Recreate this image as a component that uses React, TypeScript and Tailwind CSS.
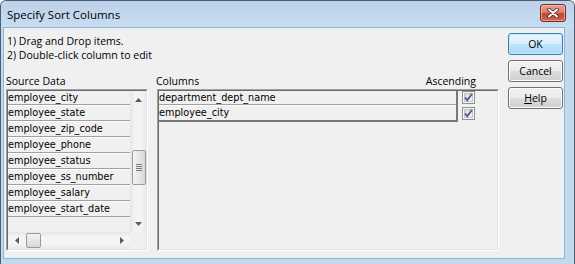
import React from "react";

const Tri = ({ dir }: { dir: "up" | "down" | "left" | "right" }) => {
  const pts =
    dir === "up"
      ? "0,4 3.5,0 7,4"
      : dir === "down"
      ? "0,0 7,0 3.5,4"
      : dir === "left"
      ? "4,0 4,7 0,3.5"
      : "0,0 0,7 4,3.5";
  const w = dir === "up" || dir === "down" ? 7 : 4;
  const h = dir === "up" || dir === "down" ? 4 : 7;
  return (
    <svg width={w} height={h} viewBox={`0 0 ${w} ${h}`}>
      <polygon points={pts} fill="#5c5c5c" />
    </svg>
  );
};

const Check = () => (
  <div className="w-[13px] h-[13px] border border-[#8f8f8f] bg-[#f7f7f7] p-[1px]">
    <div className="w-full h-full border border-[#c4c4c4] bg-[linear-gradient(135deg,#d6d6d6,#f6f6f6)] flex items-center justify-center">
      <svg width="9" height="9" viewBox="0 0 9 9" className="overflow-visible">
        <path d="M1 4.5 L3.3 7.2 L8 0.8" fill="none" stroke="#4a5c9c" strokeWidth="1.8" />
      </svg>
    </div>
  </div>
);

const Bevel = ({ className, children }: { className: string; children: React.ReactNode }) => (
  <div className={`${className} border border-t-[#a0a0a0] border-l-[#a0a0a0] border-b-white border-r-white`}>
    <div className="w-full h-full border border-t-[#696969] border-l-[#696969] border-b-[#e3e3e3] border-r-[#e3e3e3] bg-[#f0f0f0]">
      {children}
    </div>
  </div>
);

const sourceItems = [
  "employee_city",
  "employee_state",
  "employee_zip_code",
  "employee_phone",
  "employee_status",
  "employee_ss_number",
  "employee_salary",
  "employee_start_date",
];

const btnBase =
  "w-[55px] h-[22px] rounded-[3px] border flex items-center justify-center text-black text-[10.5px] leading-none";
const btnGray =
  "border-[#707070] bg-[linear-gradient(to_bottom,#f2f2f2_0%,#ebebeb_50%,#dddddd_50%,#cfcfcf_100%)] shadow-[inset_0_0_0_1px_#fcfcfc]";
const btnBlue =
  "border-[#3c7fb1] bg-[linear-gradient(to_bottom,#eaf6fd_0%,#d9f0fc_50%,#bee6fd_50%,#a7d9f5_100%)] shadow-[inset_0_0_0_1px_#c4e9fd]";

export default function App() {
  return (
    <div className="w-[575px] h-[264px] overflow-hidden bg-[#c4d8ee] border-t border-l border-r border-[#4f5e6e] rounded-t-[6px] font-['Open_Sans',sans-serif] text-black">
      {/* Title bar */}
      <div className="h-[26px] flex items-start justify-between pl-[6px] pr-[8px] bg-[linear-gradient(to_bottom,#bcd2ea,#c9dcf0)]">
        <div className="mt-[6px] text-[11.5px] leading-[16px]">Specify Sort Columns</div>
        <div className="mt-[3px] w-[26px] h-[18px] rounded-[3px] border border-[#7a2c22] bg-[linear-gradient(to_bottom,#e3a191_0%,#d7836f_45%,#c2442f_55%,#cc6a52_100%)] flex items-center justify-center shadow-[inset_0_0_0_1px_rgba(255,220,210,0.5)]">
          <svg width="12" height="10" viewBox="0 0 12 10">
            <path d="M2 1.5 L10 8.5 M10 1.5 L2 8.5" stroke="#5a2018" strokeWidth="3.6" strokeLinecap="round" />
            <path d="M2 1.5 L10 8.5 M10 1.5 L2 8.5" stroke="#ffffff" strokeWidth="2" strokeLinecap="round" />
          </svg>
        </div>
      </div>

      {/* Body */}
      <div className="pl-[2px]">
        <div className="w-[562px] h-[232px] border border-[#86b8e0] bg-[#f0f0f0] flex">
          {/* Left area */}
          <div className="w-[495px] pl-[2px] flex flex-col">
            <div className="pl-[1px] pt-[6px] text-[10.5px] leading-[14px]">
              <div>1) Drag and Drop items.</div>
              <div>2) Double-click column to edit</div>
            </div>
            <div className="mt-[12px] h-[14px] flex gap-[9px] text-[10.5px] leading-[14px]">
              <div className="w-[142px]">Source Data</div>
              <div className="w-[342px] flex justify-between pr-[23px]">
                <span className="ml-[-1px]">Columns</span>
                <span>Ascending</span>
              </div>
            </div>
            <div className="mt-[1px] flex gap-[9px] font-['DejaVu_Sans',sans-serif] text-[9.7px]">
              {/* Source list */}
              <Bevel className="w-[142px] h-[162px]">
                <div className="flex flex-col h-full">
                  <div className="h-[141px] flex">
                    <div className="w-[122px] flex flex-col">
                      {sourceItems.map((t, i) => (
                        <div
                          key={t}
                          className={`${
                            i === 0 ? "h-[14px]" : "h-[16px] border-t border-t-white"
                          } border-b border-b-[#a0a0a0] flex items-center whitespace-nowrap leading-none`}
                        >
                          {t}
                        </div>
                      ))}
                    </div>
                    <div className="w-[16px] flex flex-col bg-[linear-gradient(to_right,#e6e6e6,#f4f4f4_30%,#f4f4f4_70%,#e9e9e9)]">
                      <div className="h-[17px] flex items-center justify-center">
                        <Tri dir="up" />
                      </div>
                      <div className="mt-[42px] ml-[2px] w-[14px] h-[35px] rounded-[2px] border border-[#9a9a9a] bg-[linear-gradient(to_right,#f4f4f4,#e6e6e6_50%,#d8d8d8)] flex flex-col items-center justify-center gap-[1px]">
                        <div className="w-[6px] h-[1px] bg-[#7a7a7a]" />
                        <div className="w-[6px] h-[1px] bg-[#7a7a7a]" />
                        <div className="w-[6px] h-[1px] bg-[#7a7a7a]" />
                        <div className="w-[6px] h-[1px] bg-[#7a7a7a]" />
                      </div>
                      <div className="flex-1" />
                      <div className="h-[17px] flex items-center justify-center">
                        <Tri dir="down" />
                      </div>
                    </div>
                  </div>
                  <div className="h-[17px] flex">
                    <div className="w-[122px] flex items-center bg-[linear-gradient(to_bottom,#e6e6e6,#f4f4f4_30%,#f4f4f4_70%,#e9e9e9)]">
                      <div className="w-[17px] flex justify-center">
                        <Tri dir="left" />
                      </div>
                      <div className="ml-[1px] w-[15px] h-[15px] rounded-[2px] border border-[#9a9a9a] bg-[linear-gradient(to_bottom,#f4f4f4,#e6e6e6_50%,#d8d8d8)]" />
                      <div className="flex-1" />
                      <div className="w-[17px] flex justify-center">
                        <Tri dir="right" />
                      </div>
                    </div>
                    <div className="w-[16px] bg-[#f0f0f0]" />
                  </div>
                </div>
              </Bevel>

              {/* Columns list */}
              <Bevel className="w-[342px] h-[162px]">
                <div className="flex items-start">
                  <div className="w-[299px] border-r-2 border-b-2 border-r-[#787878] border-b-[#787878] flex flex-col">
                    <div className="h-[14px] border-b border-b-[#a0a0a0] flex items-center whitespace-nowrap leading-none">
                      department_dept_name
                    </div>
                    <div className="h-[15px] border-t border-t-white flex items-center whitespace-nowrap leading-none">
                      employee_city
                    </div>
                  </div>
                  <div className="pl-[4px] flex flex-col gap-[3px]">
                    <Check />
                    <Check />
                  </div>
                </div>
              </Bevel>
            </div>
          </div>

          {/* Buttons */}
          <div className="ml-[9px] pt-[5px] flex flex-col gap-[5px]">
            <div className={`${btnBase} ${btnBlue}`}>OK</div>
            <div className={`${btnBase} ${btnGray}`}>Cancel</div>
            <div className={`${btnBase} ${btnGray}`}>
              <span>
                <span className="underline underline-offset-[1px]">H</span>elp
              </span>
            </div>
          </div>
        </div>
      </div>
    </div>
  );
}
